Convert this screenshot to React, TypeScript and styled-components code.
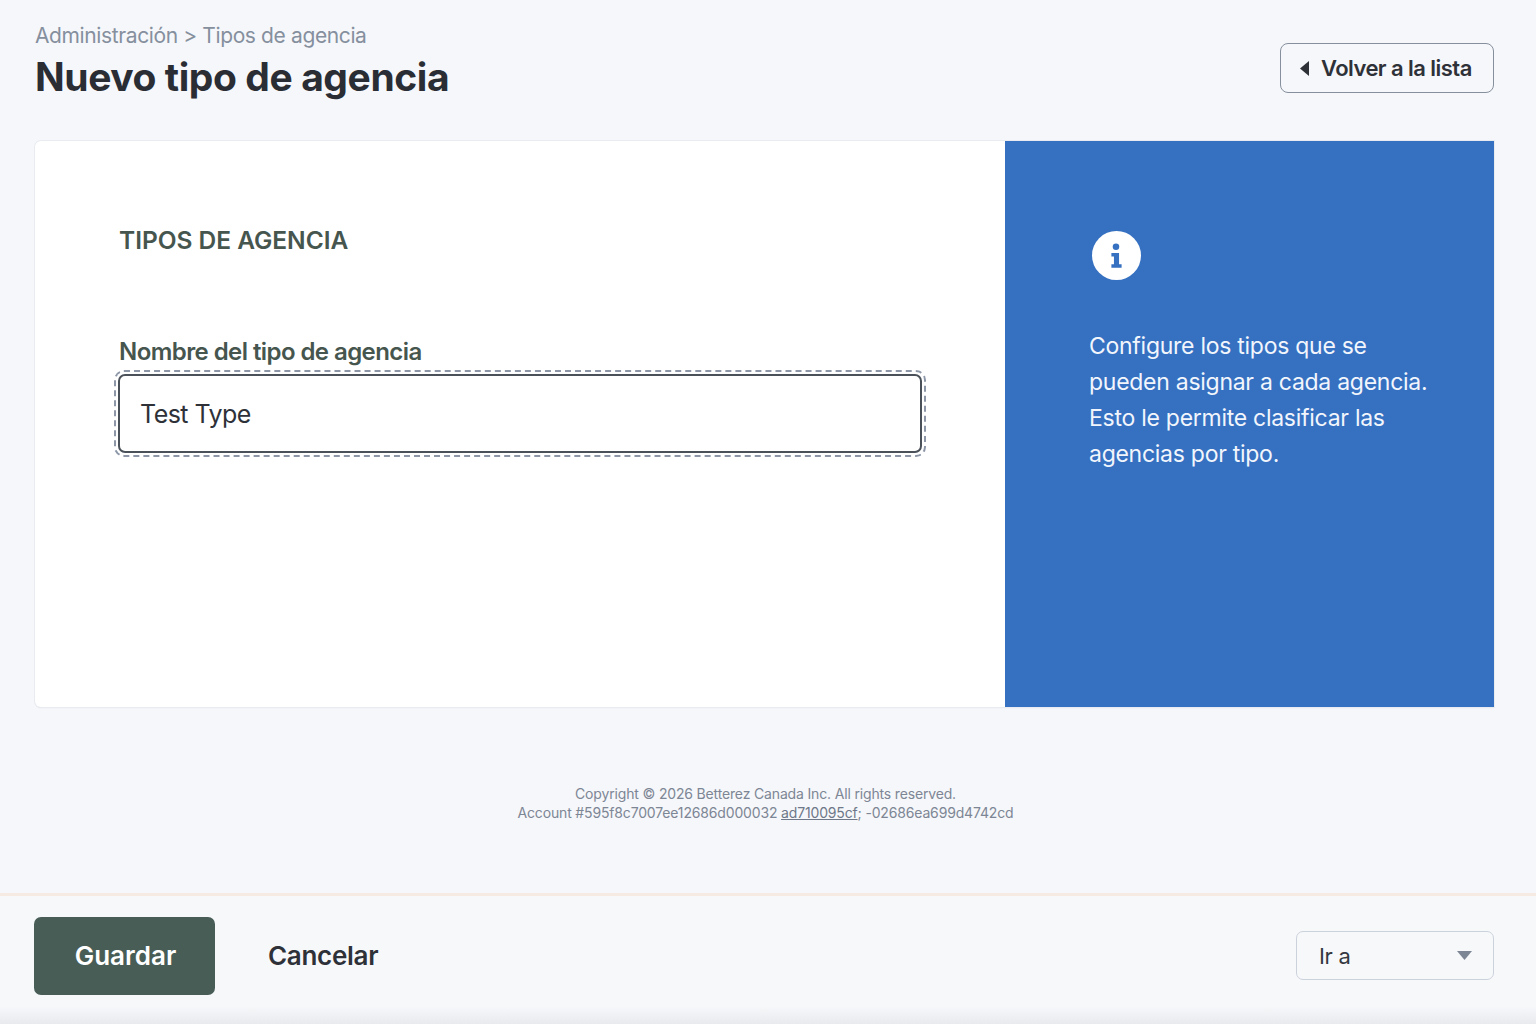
import React from "react";
import styled, { createGlobalStyle } from "styled-components";

const Global = createGlobalStyle`
  html, body { margin: 0; padding: 0; background: #f6f7fa; }
  body { font-family: Inter, "Liberation Sans", sans-serif; overflow: hidden; }
  * { box-sizing: border-box; }
`;

const Page = styled.div`
  width: 1536px;
  height: 1024px;
  display: flex;
  flex-direction: column;
  background: #f6f7fa;
`;

const Main = styled.main`
  flex: 1;
  padding: 21px 42px 0 35px;
  display: flex;
  flex-direction: column;
`;

const Header = styled.header`
  display: flex;
  justify-content: space-between;
  align-items: flex-start;
  height: 120px;
`;

const Titles = styled.div`
  display: flex;
  flex-direction: column;
`;

const Breadcrumb = styled.div`
  font-size: 21px;
  line-height: 29px;
  color: #858f9e;
  letter-spacing: -0.38px;
`;

const Title = styled.h1`
  margin: 0;
  font-size: 39px;
  line-height: 54px;
  font-weight: 700;
  color: #2a2d34;
  letter-spacing: -0.42px;
`;

const BackButton = styled.button`
  margin-top: 22px;
  width: 214px;
  height: 50px;
  display: flex;
  align-items: center;
  gap: 12px;
  padding: 0 0 0 19px;
  background: transparent;
  border: 1.5px solid #858f9e;
  border-radius: 8px;
  font: 600 22px Inter, "Liberation Sans", sans-serif;
  letter-spacing: -0.55px;
  color: #2e3138;
`;

const Card = styled.section`
  display: flex;
  height: 566px;
  background: #fff;
  border-radius: 6px 0 0 6px;
  box-shadow: 0 0 0 1px #e8ebf0, 0 1px 1px #d4d8de;
`;

const FormPane = styled.div`
  width: 970px;
  padding: 84px 80px 0 84px;
  display: flex;
  flex-direction: column;
`;

const SectionTitle = styled.h2`
  margin: -1px 0 0 0;
  font-size: 24.5px;
  line-height: 33px;
  font-weight: 600;
  color: #46564f;
  letter-spacing: -0.03px;
`;

const Label = styled.label`
  margin-top: 78px;
  font-size: 24px;
  line-height: 34px;
  font-weight: 600;
  color: #46564f;
  letter-spacing: -0.57px;
`;

const Focus = styled.div`
  margin: 1px 0 0 -5px;
  width: 812px;
  height: 87px;
  padding: 2px;
  border: 2px dashed #8d97a8;
  border-radius: 10px;
`;

const Input = styled.input`
  width: 100%;
  height: 100%;
  padding: 0 20px;
  background: #fff;
  border: 2px solid #4a5159;
  border-radius: 7px;
  outline: none;
  font: 400 25px Inter, "Liberation Sans", sans-serif;
  letter-spacing: -0.55px;
  color: #2e3138;
`;

const InfoPane = styled.aside`
  flex: 1;
  background: #3570c1;
  padding: 90px 50px 0 84px;
  color: #f2f6fc;
`;

const InfoIcon = styled.svg`
  display: block;
  width: 49px;
  height: 49px;
  margin-left: 3px;
`;

const InfoText = styled.p`
  margin: 47.5px 0 0;
  font-size: 23px;
  line-height: 36px;
  letter-spacing: -0.27px;
`;

const Copyright = styled.footer`
  margin: 77px 0 0;
  padding-left: 2px;
  text-align: center;
  font-size: 14px;
  line-height: 19px;
  letter-spacing: -0.16px;
  color: #7d8695;
`;

const AccountLink = styled.a`
  color: #6e7889;
  text-decoration: underline;
`;

const ActionBar = styled.div`
  height: 131px;
  padding: 22px 42px 30px 34px;
  display: flex;
  align-items: center;
  border-top: 3px solid #f6ebe2;
  background: linear-gradient(to bottom, #f7f8fa 0, #f7f8fa 86%, #e9eaee 100%);
`;

const SaveButton = styled.button`
  flex: none;
  width: 181px;
  height: 78px;
  padding: 0 0 2px 2px;
  background: #495d57;
  border: 0;
  border-radius: 7px;
  color: #fff;
  font: 600 26px Inter, "Liberation Sans", sans-serif;
`;

const CancelButton = styled.button`
  margin-left: 53px;
  padding: 0 0 2px;
  background: none;
  border: 0;
  color: #2e3138;
  font: 600 26px Inter, "Liberation Sans", sans-serif;
  letter-spacing: -0.3px;
`;

const GoTo = styled.div`
  margin: -1px 0 0 auto;
  width: 198px;
  height: 49px;
  display: flex;
  align-items: center;
  justify-content: space-between;
  padding: 0 21px 0 22px;
  border: 1.5px solid #ccd2dc;
  border-radius: 7px;
  font-size: 22px;
  letter-spacing: -0.3px;
  color: #343840;
`;

const Glyph = styled.svg`
  display: block;
  flex: none;
`;

export default function App() {
  return (
    <Page>
      <Global />
      <Main>
        <Header>
          <Titles>
            <Breadcrumb>Administración &gt; Tipos de agencia</Breadcrumb>
            <Title>Nuevo tipo de agencia</Title>
          </Titles>
          <BackButton>
            <Glyph width="9" height="15" viewBox="0 0 9 15"><path d="M9 0v15L0 7.5z" fill="#2e3138" /></Glyph>
            Volver a la lista
          </BackButton>
        </Header>
        <Card>
          <FormPane>
            <SectionTitle>TIPOS DE AGENCIA</SectionTitle>
            <Label htmlFor="tipo">Nombre del tipo de agencia</Label>
            <Focus>
              <Input id="tipo" defaultValue="Test Type" />
            </Focus>
          </FormPane>
          <InfoPane>
            <InfoIcon viewBox="0 0 48 48">
              <circle cx="24" cy="24" r="24" fill="#fff" />
              <circle cx="23.5" cy="15.5" r="3.2" fill="#3570c1" />
              <path d="M19 21.5h7.5v11h2.5v3.5h-10v-3.5h2.5v-7.5h-2.5z" fill="#3570c1" />
            </InfoIcon>
            <InfoText>
              Configure los tipos que se<br />
              pueden asignar a cada agencia.<br />
              Esto le permite clasificar las<br />
              agencias por tipo.
            </InfoText>
          </InfoPane>
        </Card>
        <Copyright>
          Copyright © 2026 Betterez Canada Inc. All rights reserved.<br />
          Account #595f8c7007ee12686d000032 <AccountLink>ad710095cf</AccountLink>; -02686ea699d4742cd
        </Copyright>
      </Main>
      <ActionBar>
        <SaveButton>Guardar</SaveButton>
        <CancelButton>Cancelar</CancelButton>
        <GoTo>
          Ir a
          <Glyph width="15" height="9" viewBox="0 0 15 9"><path d="M0 0h15L7.5 9z" fill="#7d8695" /></Glyph>
        </GoTo>
      </ActionBar>
    </Page>
  );
}
